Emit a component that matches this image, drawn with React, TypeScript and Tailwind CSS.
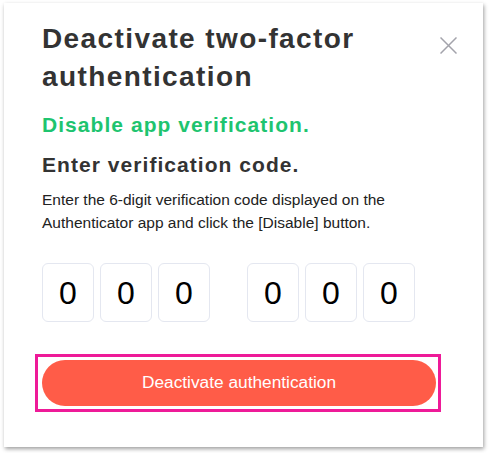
import React from "react";

export default function App() {
  const digits = ["0", "0", "0"];
  const Box = ({ d }: { d: string }) => (
    <div className="w-[52px] h-[59px] rounded-[6px] border border-[#e4e7f0] bg-white flex items-center justify-center text-[32px] text-black font-['Liberation_Sans',Arial,sans-serif]">
      {d}
    </div>
  );
  return (
    <div className="w-[489px] h-[453px] bg-white overflow-hidden pt-[3px] pl-[4px] font-['Liberation_Sans',Arial,sans-serif]">
      <div className="w-[479px] h-[444px] bg-white shadow-[1px_2px_4px_rgba(0,0,0,0.38)] pl-[38px] pt-[17px] flex flex-col">
        <div className="flex items-start justify-between pr-[26px]">
          <h1 className="text-[28px] leading-[38px] font-bold text-[#333333] tracking-[0.05em] w-[330px]">
            Deactivate two-factor authentication
          </h1>
          <button className="mt-[17px] w-[17px] h-[17px] text-[#a3a3ab]" aria-label="close">
            <svg width="17" height="17" viewBox="0 0 17 17" fill="none" stroke="currentColor" strokeWidth="1.5">
              <path d="M0.5 0.5 L16.5 16.5 M16.5 0.5 L0.5 16.5" />
            </svg>
          </button>
        </div>
        <p className="mt-[15px] text-[21px] leading-[28px] font-bold text-[#1ec46f] tracking-[0.05em]">
          Disable app verification.
        </p>
        <p className="mt-[12px] text-[21px] leading-[28px] font-bold text-[#333333] tracking-[0.05em]">
          Enter verification code.
        </p>
        <p className="mt-[9px] text-[15.5px] leading-[23px] text-[#222222]">
          Enter the 6-digit verification code displayed on the
          <br />
          Authenticator app and click the [Disable] button.
        </p>
        <div className="mt-[29px] flex items-center">
          <div className="flex gap-[6px]">
            {digits.map((d, i) => (
              <Box key={i} d={d} />
            ))}
          </div>
          <div className="ml-[37px] flex gap-[6px]">
            {digits.map((d, i) => (
              <Box key={i} d={d} />
            ))}
          </div>
        </div>
        <div className="mt-[32px] -ml-[7px] w-[406px] border-[3px] border-[#ee1a98] pt-[3px] pb-[3px] pl-[4px]">
          <button className="w-[394px] h-[46px] rounded-full bg-[#ff5c48] text-white text-[17.3px] flex items-center justify-center">
            Deactivate authentication
          </button>
        </div>
      </div>
    </div>
  );
}
